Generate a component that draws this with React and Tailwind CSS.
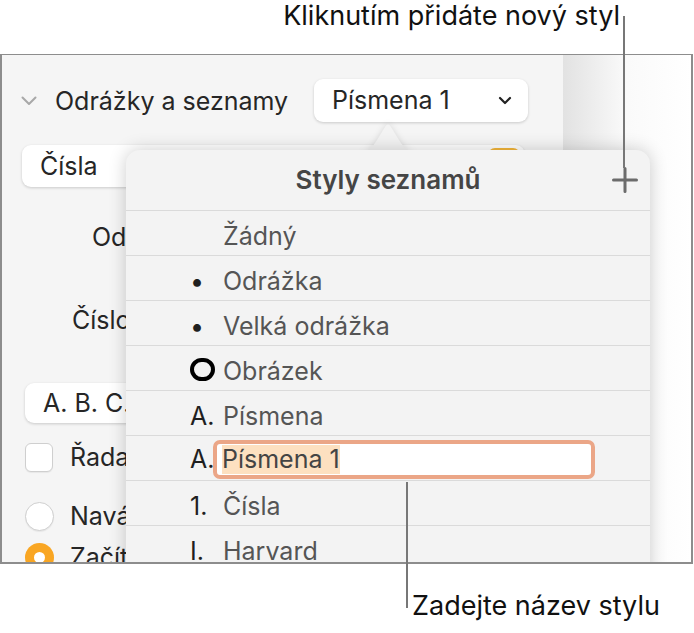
import React from "react";

const ui = { fontFamily: "Inter, 'Noto Sans', sans-serif" };

function Row({ marker, label, children }) {
  return (
    <div className={"flex h-[45px] items-center border-b border-[#dadada] " + (children ? "pt-[2px]" : "pt-[7px]")}>
      <div className="w-[97px] pl-[64px] shrink-0 text-[#1f1f1f] text-[25px] leading-none">{marker}</div>
      {children ? children : <div className="text-[25px] text-[#555] leading-none">{label}</div>}
    </div>
  );
}

export default function App() {
  return (
    <div className="relative w-[694px] h-[633px] bg-white overflow-hidden" style={ui}>
      {/* top callout */}
      <div className="h-[54px] flex justify-end pr-[74px] pt-[2px]">
        <div className="text-[27px] text-[#111] leading-none">Kliknutím přidáte nový styl</div>
      </div>

      {/* frame */}
      <div className="relative w-[693px] h-[510px] border-2 border-t border-[#8d8d8d] flex overflow-hidden">
        {/* sidebar */}
        <div className="w-[561px] h-full bg-[#f5f5f5] flex flex-col text-[#262626] text-[25px] overflow-hidden">
          <div className="shrink-0 mt-[24px] h-[43px] flex items-center">
            <svg className="ml-[19px]" width="16" height="10" viewBox="0 0 16 10">
              <path d="M1.5 1.5 L8 8 L14.5 1.5" fill="none" stroke="#a8a8a8" strokeWidth="2" strokeLinecap="round" strokeLinejoin="round" />
            </svg>
            <span className="ml-[18px] leading-none pt-[2px]">Odrážky a seznamy</span>
            <div className="ml-auto mr-[35px] w-[214px] h-[43px] bg-white rounded-[9px] shadow-[0_1px_3px_rgba(0,0,0,0.18)] flex items-center pl-[18px] pr-[16px]">
              <span className="leading-none">Písmena 1</span>
              <svg className="ml-auto" width="14" height="9" viewBox="0 0 14 9">
                <path d="M2 2 L7 7 L12 2" fill="none" stroke="#222" strokeWidth="2.2" strokeLinecap="round" strokeLinejoin="round" />
              </svg>
            </div>
          </div>

          <div className="shrink-0 mt-[23px] ml-[20px] w-[503px] h-[42px] bg-white rounded-[9px] shadow-[0_1px_3px_rgba(0,0,0,0.18)] flex items-center pl-[18px] pr-[5px]">
            <span className="leading-none">Čísla</span>
            <div className="ml-auto self-start mt-[3px] w-[32px] h-[34px] rounded-[7px] bg-[#f5b73a]" />
          </div>

          <div className="shrink-0 mt-[36px] ml-[90px] h-[28px] flex items-center leading-none">Odsazení</div>
          <div className="shrink-0 mt-[55px] ml-[70px] h-[28px] flex items-center leading-none">Číslování</div>

          <div className="shrink-0 mt-[49px] ml-[23px] w-[500px] h-[40px] bg-white rounded-[9px] shadow-[0_1px_3px_rgba(0,0,0,0.18)] flex items-center pl-[18px]">
            <span className="leading-none">A. B. C. D.</span>
          </div>

          <div className="shrink-0 mt-[20px] ml-[23px] h-[29px] flex items-center">
            <div className="w-[28px] h-[29px] rounded-[6px] bg-white border border-[#cfcfcf] shadow-[0_1px_1px_rgba(0,0,0,0.06)]" />
            <span className="ml-[17px] leading-none">Řada pokračuje</span>
          </div>

          <div className="shrink-0 mt-[30px] ml-[23px] h-[29px] flex items-center">
            <div className="w-[29px] h-[29px] rounded-full bg-white border border-[#cfcfcf] shadow-[0_1px_1px_rgba(0,0,0,0.06)]" />
            <span className="ml-[16px] leading-none">Navázat na předchozí</span>
          </div>

          <div className="shrink-0 mt-[12px] ml-[23px] h-[29px] flex items-center">
            <div className="w-[29px] h-[29px] rounded-full bg-[#f9a623] flex items-center justify-center">
              <div className="w-[11px] h-[11px] rounded-full bg-white" />
            </div>
            <span className="ml-[16px] leading-none">Začít od</span>
          </div>
        </div>

        {/* right canvas area */}
        <div className="flex-1 h-full bg-gradient-to-r from-[#e2e2e2] via-[#fafafa] to-white" />

        {/* popover arrow */}
        <svg className="absolute left-[356px] top-[67px]" width="60" height="30" viewBox="0 0 60 30" style={{ filter: "drop-shadow(0 0 3px rgba(0,0,0,0.12))" }}>
          <path d="M0 30 C10 30 14 26 19 18 L27 5 Q30 0 33 5 L41 18 C46 26 50 30 60 30 Z" fill="#f3f3f3" />
        </svg>

        {/* popover */}
        <div className="absolute left-[124px] top-[95px] w-[524px] h-[460px] bg-[#f3f3f3] rounded-[14px] shadow-[0_0_18px_rgba(0,0,0,0.2)]">
          <div className="h-[61px] border-b border-[#dadada] flex items-center justify-center relative">
            <span className="text-[26px] font-semibold text-[#454545] leading-none">Styly seznamů</span>
            <svg className="absolute left-[486px] top-[17px]" width="26" height="26" viewBox="0 0 26 26">
              <path d="M13 1.5 V24.5 M1.5 13 H24.5" stroke="#6b6b6b" strokeWidth="3" strokeLinecap="round" />
            </svg>
          </div>
          <Row marker="" label="Žádný" />
          <Row marker="•" label="Odrážka" />
          <Row marker="•" label="Velká odrážka" />
          <div className="flex h-[45px] items-center border-b border-[#dadada] pt-[2px]">
            <div className="w-[97px] pl-[64px] shrink-0">
              <div className="w-[25px] h-[23px] rounded-full border-[4px] border-black" />
            </div>
            <div className="text-[25px] text-[#555] leading-none pt-[5px]">Obrázek</div>
          </div>
          <Row marker="A." label="Písmena" />
          <Row marker="A.">
            <div className="-ml-[10px] w-[382px] h-[39px] rounded-[7px] border-[4px] border-[#eba687] bg-white flex items-center pl-[5px]">
              <span className="text-[25px] text-[#444] leading-none bg-[#fde0c0] py-[2px]">Písmena 1</span>
            </div>
          </Row>
          <Row marker="1." label="Čísla" />
          <Row marker="I." label="Harvard" />
          <Row marker="i." label="Římské" />
        </div>
      </div>

      {/* callout lines */}
      <div className="absolute left-[623px] top-[16px] w-[2px] h-[152px] bg-[#777]" />
      <div className="absolute left-[406px] top-[482px] w-[2px] h-[126px] bg-[#777]" />
      <div className="absolute left-[412px] top-[592px] text-[27px] text-[#111] leading-none">Zadejte název stylu</div>
    </div>
  );
}
